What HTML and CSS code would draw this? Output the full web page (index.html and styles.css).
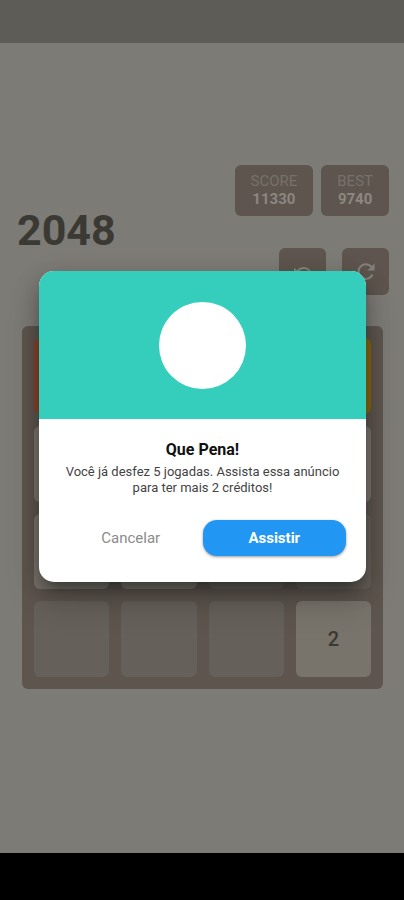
FILE: index.html
```html
<!DOCTYPE html>
<html lang="pt-BR">
<head>
<meta charset="utf-8">
<meta name="viewport" content="width=device-width, initial-scale=1">
<title>2048</title>
<link rel="stylesheet" href="styles.css">
</head>
<body>
<div class="status-bar"></div>
<main class="game">
  <header class="top">
    <h1 class="title">2048</h1>
    <div class="panel">
      <div class="scores">
        <div class="score"><span>SCORE</span><strong>11330</strong></div>
        <div class="score"><span>BEST</span><strong>9740</strong></div>
      </div>
      <div class="tools">
        <button class="tool" type="button" aria-label="Desfazer">
          <svg viewBox="0 0 24 24"><path class="arc" d="M6.500 11.500C9 7.500 16 6 19 12a7 7 0 0 1-2 7"/><path d="M3 7.500v7h7z"/></svg>
        </button>
        <button class="tool" type="button" aria-label="Reiniciar">
          <svg viewBox="0 0 24 24"><path class="arc" d="M18.300 8.200A7.300 7.300 0 1 0 18.500 14.500"/><path d="M20.500 3.500v7h-7z"/></svg>
        </button>
      </div>
    </div>
  </header>
  <section class="board" aria-label="Tabuleiro">
    <div class="cell orange"></div><div class="cell"></div><div class="cell"></div><div class="cell gold"></div>
    <div class="cell light"></div><div class="cell"></div><div class="cell"></div><div class="cell light"></div>
    <div class="cell light"></div><div class="cell light"></div><div class="cell"></div><div class="cell"></div>
    <div class="cell"></div><div class="cell"></div><div class="cell"></div><div class="cell light">2</div>
  </section>
</main>
<div class="nav-bar"></div>
<div class="overlay">
  <div class="dialog" role="dialog" aria-labelledby="dialog-title">
    <div class="banner"><div class="circle"></div></div>
    <div class="content">
      <h2 id="dialog-title">Que Pena!</h2>
      <p>Você já desfez 5 jogadas. Assista essa anúncio para ter mais 2 créditos!</p>
      <div class="actions">
        <button class="action" type="button">Cancelar</button>
        <button class="action primary" type="button">Assistir</button>
      </div>
    </div>
  </div>
</div>
</body>
</html>
```
FILE: styles.css
```css
* { box-sizing: border-box; }
body {
  margin: 0;
  min-height: 100vh;
  display: flex;
  flex-direction: column;
  position: relative;
  background: #7d7b76;
  font-family: Roboto, "Liberation Sans", sans-serif;
}
h1, h2, p { margin: 0; }
button { border: 0; padding: 0; font: inherit; }
.status-bar { height: 43px; background: #5d5c57; }
.nav-bar { height: 47px; background: #000; }
.game {
  flex: 1;
  display: flex;
  flex-direction: column;
  justify-content: center;
  gap: 31px;
  padding-bottom: 42px;
}
.top {
  display: flex;
  justify-content: space-between;
  align-items: center;
  padding: 0 15px 0 17px;
}
.title { font-size: 43px; line-height: 48px; color: #3b3933; }
.panel { display: flex; flex-direction: column; align-items: flex-end; gap: 32px; }
.scores { display: flex; gap: 8px; }
.score {
  display: flex;
  flex-direction: column;
  align-items: center;
  padding: 7px 16px 8px;
  border-radius: 6px;
  background: #5d554e;
  font-size: 15px;
  line-height: 18px;
  color: #77716a;
}
.score strong { color: #8c8781; }
.tools { display: flex; gap: 16px; }
.tool {
  width: 47px;
  height: 47px;
  display: grid;
  place-items: center;
  border-radius: 6px;
  background: #5d554e;
}
.tool svg { width: 24px; height: 24px; fill: #85827c; }
.tool .arc { fill: none; stroke: #85827c; stroke-width: 2; }
.board {
  display: grid;
  grid-template: repeat(4, 1fr) / repeat(4, 1fr);
  gap: 12px;
  margin: 0 21px 0 22px;
  padding: 12px;
  aspect-ratio: 361 / 363;
  border-radius: 6px;
  background: #5d554e;
}
.cell {
  display: grid;
  place-items: center;
  border-radius: 6px;
  background: #66605a;
  font-size: 20px;
  font-weight: 500;
  color: #3b3933;
}
.light { background: #78736b; }
.orange { background: #8c4227; }
.gold { background: #856512; }
.overlay {
  position: absolute;
  inset: 0 0 47px;
  display: grid;
  place-items: center;
  padding: 0 38px 0 39px;
}
.dialog {
  width: 100%;
  overflow: hidden;
  border-radius: 15px;
  background: #fff;
  box-shadow: 0 11px 15px -7px rgba(0, 0, 0, .4), 0 20px 32px 2px rgba(0, 0, 0, .16), 0 6px 24px 2px rgba(0, 0, 0, .14);
}
.banner { display: grid; place-items: center; padding: 31px 0 30px; background: #35cebd; }
.circle { width: 87px; height: 87px; border-radius: 50%; background: #fff; }
.content { padding: 20px 20px 26px; text-align: center; }
.content h2 { font-size: 16px; line-height: 22px; font-weight: 700; color: #111; }
.content p { margin-top: 3px; font-size: 13px; line-height: 16px; color: #444; }
.actions { display: grid; grid-template-columns: 1fr 1fr; margin-top: 24px; }
.action {
  height: 36px;
  border-radius: 14px;
  background: none;
  font-size: 15px;
  color: #8b8b8b;
}
.primary {
  background: #2196f3;
  color: #fff;
  font-weight: 700;
  box-shadow: 0 1px 3px rgba(0, 0, 0, .4);
}
```
